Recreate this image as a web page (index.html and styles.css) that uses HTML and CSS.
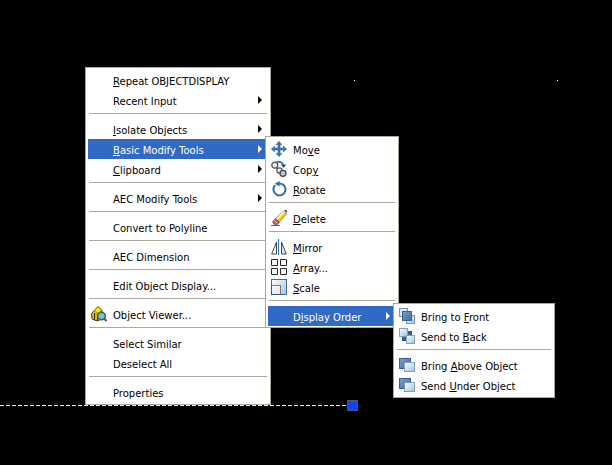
FILE: index.html
```html
<!DOCTYPE html>
<html lang="en">
<head>
<meta charset="utf-8">
<title>Context menu</title>
<link rel="stylesheet" href="styles.css">
</head>
<body>
<svg class="defs" width="0" height="0" aria-hidden="true">
  <defs>
    <linearGradient id="lt" x1="0" y1="0" x2="1" y2="1"><stop offset="0" stop-color="#ffffff"/><stop offset="1" stop-color="#a9c0d8"/></linearGradient>
    <linearGradient id="dk" x1="0" y1="0" x2="1" y2="1"><stop offset="0" stop-color="#7f9fc4"/><stop offset="1" stop-color="#3f6c9e"/></linearGradient>
  </defs>
</svg>
<main class="canvas">
  <span class="dot dot-a"></span>
  <span class="dot dot-b"></span>
  <div class="dash"></div>
  <div class="grip"></div>

  <div class="menu menu-main">
    <div class="item"><span class="slot"></span><span class="label"><u>R</u>epeat OBJECTDISPLAY</span></div>
    <div class="item"><span class="slot"></span><span class="label">Recent Input</span><span class="arrow"></span></div>
    <div class="sep"></div>
    <div class="item"><span class="slot"></span><span class="label"><u>I</u>solate Objects</span><span class="arrow"></span></div>
    <div class="item active"><span class="slot"></span><span class="label"><u>B</u>asic Modify Tools</span><span class="arrow"></span></div>
    <div class="item"><span class="slot"></span><span class="label"><u>C</u>lipboard</span><span class="arrow"></span></div>
    <div class="sep"></div>
    <div class="item"><span class="slot"></span><span class="label">AEC Modify Tools</span><span class="arrow"></span></div>
    <div class="sep"></div>
    <div class="item"><span class="slot"></span><span class="label">Convert to Polyline</span></div>
    <div class="sep"></div>
    <div class="item"><span class="slot"></span><span class="label">AEC Dimension</span></div>
    <div class="sep"></div>
    <div class="item"><span class="slot"></span><span class="label">Edit Object Display...</span></div>
    <div class="sep"></div>
    <div class="item"><span class="slot">
      <svg class="icon" viewBox="0 0 16 16">
        <path d="M.5 7.500 7 .5l4 4v8.500l-5 2-5-2z" fill="#e0c000" stroke="#3a3418" stroke-width=".9"/>
        <path d="M3.500 4.500 7 .8l3.500 3.700L7 7.500z" fill="#fff000" stroke="#6a5a10" stroke-width=".6"/>
        <path d="M3.500 7v7M6.500 7.500V15" stroke="#3a3418" stroke-width="1.100"/>
        <circle cx="10.500" cy="10" r="3.800" fill="#72c4d0" stroke="#4d5a60" stroke-width="1.500"/>
        <path d="m13.200 12.700 2.400 2.400" stroke="#555" stroke-width="2"/>
      </svg></span><span class="label">Object Viewer...</span></div>
    <div class="sep"></div>
    <div class="item"><span class="slot"></span><span class="label">Select Similar</span></div>
    <div class="item"><span class="slot"></span><span class="label">Deselect All</span></div>
    <div class="sep"></div>
    <div class="item"><span class="slot"></span><span class="label">Properties</span></div>
  </div>

  <div class="menu menu-modify">
    <div class="item"><span class="slot">
      <svg class="icon" viewBox="0 0 16 16">
        <path d="M8 .3 11 3.700H9.100v3.200h3.200V5L15.700 8l-3.400 3V9.100H9.100v3.200H11L8 15.700 5 12.300h1.900V9.100H3.700V11L.3 8l3.400-3v1.900h3.200V3.700H5z" fill="#3f74a8" stroke="#2c5a88" stroke-width=".4"/>
      </svg></span><span class="label">Mo<u>v</u>e</span></div>
    <div class="item"><span class="slot">
      <svg class="icon" viewBox="0 0 16 16">
        <circle cx="3.800" cy="4.200" r="3" fill="#e8e8e8" stroke="#555" stroke-width="1.300"/>
        <circle cx="8.500" cy="9.500" r="2.600" fill="#f0f0f0" stroke="#555" stroke-width="1.200"/>
        <circle cx="12" cy="12.300" r="3" fill="#c4ccd4" stroke="#444" stroke-width="1.300"/>
        <path d="M5 1.200c3-1 6-.2 7.400 2.600" fill="none" stroke="#2f6498" stroke-width="1.400"/>
        <path d="m9.800 3.600 5.200-.2-2.200 3.600z" fill="#1f4f80"/>
      </svg></span><span class="label">Cop<u>y</u></span></div>
    <div class="item"><span class="slot">
      <svg class="icon" viewBox="0 0 16 16">
        <path d="M4.200 4.200a6 6 0 1 0 4-1.800" fill="none" stroke="#3a6c9e" stroke-width="2"/>
        <path d="M8.600 0 3.600 2.800 8.600 5.600z" fill="#3a6c9e"/>
      </svg></span><span class="label"><u>R</u>otate</span></div>
    <div class="sep"></div>
    <div class="item"><span class="slot">
      <svg class="icon" viewBox="0 0 16 16">
        <path d="M0 15.500h9" stroke="#7a5a5a" stroke-width="1"/>
        <path d="M12.500 1 15.500 3.800 8.500 12 4.500 8.500z" fill="#f0cc30" stroke="#6f6228" stroke-width=".7"/>
        <path d="M12.500 1 13.800 2.300 6.500 10 4.800 8.700z" fill="#fff6a8"/>
        <path d="M13 .3 15.700 3l.3-3z" fill="#444"/>
        <path d="M4.500 8.500 8.500 12 6.600 14.500H3L1.500 12z" fill="#d8504a" stroke="#7a3a3a" stroke-width=".6"/>
        <path d="M3.500 10.500 6 13" stroke="#f2b8b0" stroke-width="1"/>
      </svg></span><span class="label"><u>D</u>elete</span></div>
    <div class="sep"></div>
    <div class="item"><span class="slot">
      <svg class="icon" viewBox="0 0 16 16">
        <path d="M5.500 3v12H.7z" fill="#fff" stroke="#444" stroke-width="1"/>
        <path d="M10.500 3v12h4.800z" fill="#e4e8ec" stroke="#444" stroke-width="1"/>
        <path d="M7.500 0v16" stroke="#2f78c0" stroke-width="1"/>
      </svg></span><span class="label"><u>M</u>irror</span></div>
    <div class="item"><span class="slot">
      <svg class="icon" viewBox="0 0 16 16">
        <path d="M.5.5h6v6h-6zM9.500.5h6v6h-6zM.5 9.500h6v6h-6zM9.500 9.500h6v6h-6z" fill="#f6f6f6" stroke="#2a2a2a" stroke-width="1"/>
      </svg></span><span class="label"><u>A</u>rray...</span></div>
    <div class="item"><span class="slot">
      <svg class="icon" viewBox="0 0 16 16">
        <rect x=".5" y=".5" width="15" height="15" fill="url(#lt)" stroke="#3f6c9e" stroke-width="1"/>
        <rect x=".5" y="6.500" width="9" height="9" fill="#fff" fill-opacity=".5" stroke="#111" stroke-width="1" stroke-dasharray="1 1"/>
      </svg></span><span class="label"><u>S</u>cale</span></div>
    <div class="sep"></div>
    <div class="item active"><span class="slot"></span><span class="label">D<u>i</u>splay Order</span><span class="arrow"></span></div>
  </div>

  <div class="menu menu-order">
    <div class="item"><span class="slot">
      <svg class="icon" viewBox="0 0 16 16">
        <rect x=".5" y=".5" width="8" height="8" fill="#dfe8f1" stroke="#6f95bb"/>
        <rect x="7.500" y="7.500" width="8" height="8" fill="url(#lt)" stroke="#6f95bb"/>
        <rect x="3.500" y="3.500" width="9" height="9" fill="url(#dk)" stroke="#3a6595"/>
      </svg></span><span class="label">Bring to <u>F</u>ront</span></div>
    <div class="item"><span class="slot">
      <svg class="icon" viewBox="0 0 16 16">
        <rect x="3.500" y="3.500" width="9" height="9" fill="#376494" stroke="#2d5686"/>
        <rect x=".5" y=".5" width="8" height="8" fill="url(#lt)" stroke="#7f9fc0"/>
        <rect x="7.500" y="7.500" width="8" height="8" fill="url(#lt)" stroke="#7f9fc0"/>
      </svg></span><span class="label">Send to <u>B</u>ack</span></div>
    <div class="sep"></div>
    <div class="item"><span class="slot">
      <svg class="icon" viewBox="0 0 16 16">
        <rect x=".5" y="1.500" width="11" height="10" fill="url(#dk)" stroke="#35608f"/>
        <rect x="5.500" y="5.500" width="10" height="9" fill="url(#lt)" stroke="#7f9fc0"/>
      </svg></span><span class="label">Bring <u>A</u>bove Object</span></div>
    <div class="item"><span class="slot">
      <svg class="icon" viewBox="0 0 16 16">
        <rect x=".5" y="1.500" width="11" height="10" fill="url(#dk)" stroke="#35608f"/>
        <rect x="5.500" y="5.500" width="10" height="9" fill="url(#lt)" stroke="#7f9fc0"/>
      </svg></span><span class="label">Send <u>U</u>nder Object</span></div>
  </div>
</main>
</body>
</html>
```
FILE: styles.css
```css
* { box-sizing: border-box; }
html, body { margin: 0; background: #000; }
.defs { position: absolute; }
.canvas {
  position: relative;
  width: 612px;
  height: 465px;
  overflow: hidden;
  background: #000;
  font-family: "DejaVu Sans", sans-serif;
  font-size: 10px;
  color: #000;
}
.dot { position: absolute; top: 80px; width: 1px; height: 1px; background: #fff; }
.dot-a { left: 354px; }
.dot-b { left: 557px; }
.dash {
  position: absolute;
  left: 0;
  top: 405px;
  width: 347px;
  height: 1px;
  background: repeating-linear-gradient(90deg, #fff 0 4px, #000 4px 6px);
}
.grip {
  position: absolute;
  left: 347px;
  top: 400px;
  width: 11px;
  height: 11px;
  background: #0a46ff;
  border: 1px solid #555;
}
.menu {
  position: absolute;
  display: flex;
  flex-direction: column;
  padding: 2px;
  background: #fff;
  border: 1px solid #aca899;
}
.menu-main { left: 85px; top: 67px; width: 186px; height: 338px; }
.menu-modify { left: 265px; top: 136px; width: 134px; height: 192px; }
.menu-order { left: 393px; top: 303px; width: 162px; height: 95px; }
.item {
  display: flex;
  align-items: center;
  height: 20px;
  flex: none;
  white-space: nowrap;
}
.slot {
  flex: none;
  width: 25px;
  padding-left: 3px;
  display: flex;
  align-items: center;
}
.label { flex: 1; padding-top: 2px; }
.icon { display: block; width: 16px; height: 16px; }
.arrow {
  flex: none;
  width: 0;
  height: 0;
  margin-right: 6px;
  border-left: 4px solid #000;
  border-top: 4px solid transparent;
  border-bottom: 4px solid transparent;
}
.active { background: #316ac5; color: #fff; }
.active .arrow { border-left-color: #fff; }
.sep {
  flex: none;
  height: 9px;
  margin: 0 1px;
  padding-top: 3px;
}
.sep::before { content: ""; display: block; height: 1px; background: #aca899; }
```
